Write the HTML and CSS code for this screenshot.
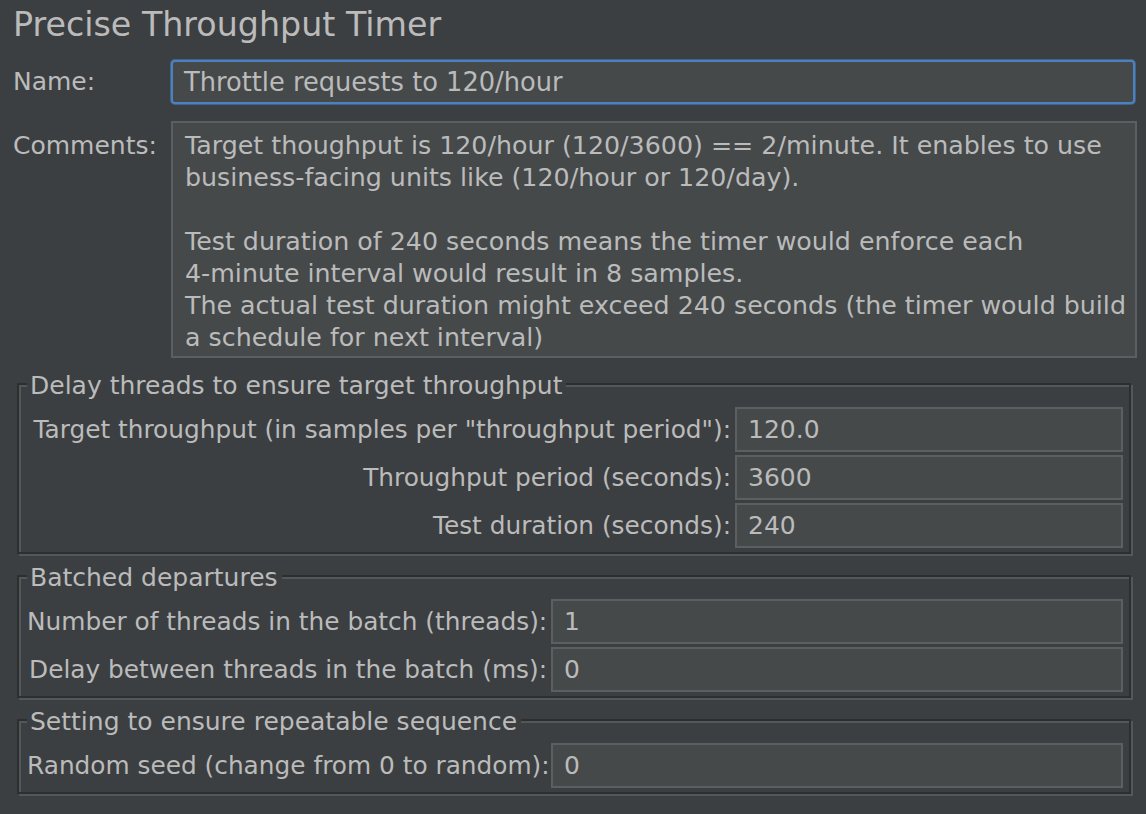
FILE: index.html
```html
<!DOCTYPE html>
<html lang="en">
<head>
<meta charset="utf-8">
<title>Precise Throughput Timer</title>
<link rel="stylesheet" href="styles.css">
</head>
<body>
<div class="panel">
  <h1 class="title">Precise Throughput Timer</h1>

  <div class="top-row name-row">
    <div class="top-label">Name:</div>
    <div class="field field-focused">Throttle requests to 120/hour</div>
  </div>

  <div class="top-row comments-row">
    <div class="top-label comments-label">Comments:</div>
    <div class="textarea">Target thoughput is 120/hour (120/3600) == 2/minute. It enables to use<br>business-facing units like (120/hour or 120/day).<br><br>Test duration of 240 seconds means the timer would enforce each<br>4-minute interval would result in 8 samples.<br>The actual test duration might exceed 240 seconds (the timer would build<br>a schedule for next interval)</div>
  </div>

  <section class="group">
    <div class="legend"><span class="legend-text">Delay threads to ensure target throughput</span></div>
    <div class="rows rows-wide">
      <div class="row-label">Target throughput (in samples per "throughput period"):</div>
      <div class="field">120.0</div>
      <div class="row-label">Throughput period (seconds):</div>
      <div class="field">3600</div>
      <div class="row-label">Test duration (seconds):</div>
      <div class="field">240</div>
    </div>
  </section>

  <section class="group">
    <div class="legend"><span class="legend-text">Batched departures</span></div>
    <div class="rows rows-narrow">
      <div class="row-label">Number of threads in the batch (threads):</div>
      <div class="field">1</div>
      <div class="row-label">Delay between threads in the batch (ms):</div>
      <div class="field">0</div>
    </div>
  </section>

  <section class="group">
    <div class="legend"><span class="legend-text">Setting to ensure repeatable sequence</span></div>
    <div class="rows rows-narrow">
      <div class="row-label">Random seed (change from 0 to random):</div>
      <div class="field">0</div>
    </div>
  </section>
</div>
</body>
</html>
```

FILE: styles.css
```css
html, body {
  margin: 0;
  padding: 0;
  background: #3c3f41;
}

body {
  width: 1146px;
  height: 814px;
  overflow: hidden;
  color: #bbbbbb;
  font-family: "DejaVu Sans", Verdana, sans-serif;
  font-size: 25px;
}

.panel {
  padding: 0 9px 0 13px;
}

.title {
  margin: 0;
  padding-top: 1px;
  font-size: 33.3px;
  font-weight: normal;
  line-height: 48px;
  color: #bbbbbb;
  white-space: nowrap;
}

.top-row {
  display: grid;
  grid-template-columns: 158px 1fr;
  align-items: start;
}

.name-row {
  margin-top: 11px;
  margin-right: 2px;
}

.top-label {
  line-height: 44px;
  white-space: nowrap;
}

.comments-row {
  margin-top: 17px;
}

.comments-label {
  padding-top: 9px;
  line-height: 32px;
}

.field {
  box-sizing: border-box;
  height: 45px;
  padding: 0 11px;
  background: #45494a;
  border: 2px solid #5c5f61;
  line-height: 41px;
  font-size: 25px;
  white-space: nowrap;
  overflow: hidden;
}

.field-focused {
  height: 44px;
  line-height: 40px;
  font-size: 25.7px;
  border-color: #4d80be;
  border-radius: 4px;
  box-shadow: 0 0 0 1px #3f6489;
}

.textarea {
  box-sizing: border-box;
  height: 237px;
  padding: 7px 12px 2px;
  background: #45494a;
  border: 2px solid #5c5f61;
  font-size: 25.3px;
  line-height: 32px;
  white-space: nowrap;
  overflow: hidden;
}

.group {
  margin: 21px 6px 0 4px;
  padding: 0 6px 4px 8px;
  border: 2px solid #2c2e30;
  box-shadow: inset 2px 2px 0 #545759, 2px 2px 0 #545759;
}

.group:first-of-type {
  margin-top: 25px;
}

.legend {
  display: flex;
  margin-top: -15px;
  line-height: 32px;
}

.legend-text {
  padding: 0 4px 0 3px;
  background: #3c3f41;
  white-space: nowrap;
}

.rows {
  display: grid;
  margin-top: 5px;
  row-gap: 3px;
  grid-auto-rows: 45px;
}

.rows-wide {
  grid-template-columns: 704px 1fr;
  column-gap: 4px;
}

.rows-narrow {
  grid-template-columns: 520px 1fr;
  column-gap: 4px;
}

.row-label {
  text-align: right;
  line-height: 45px;
  font-size: 24.8px;
  white-space: nowrap;
}
```
